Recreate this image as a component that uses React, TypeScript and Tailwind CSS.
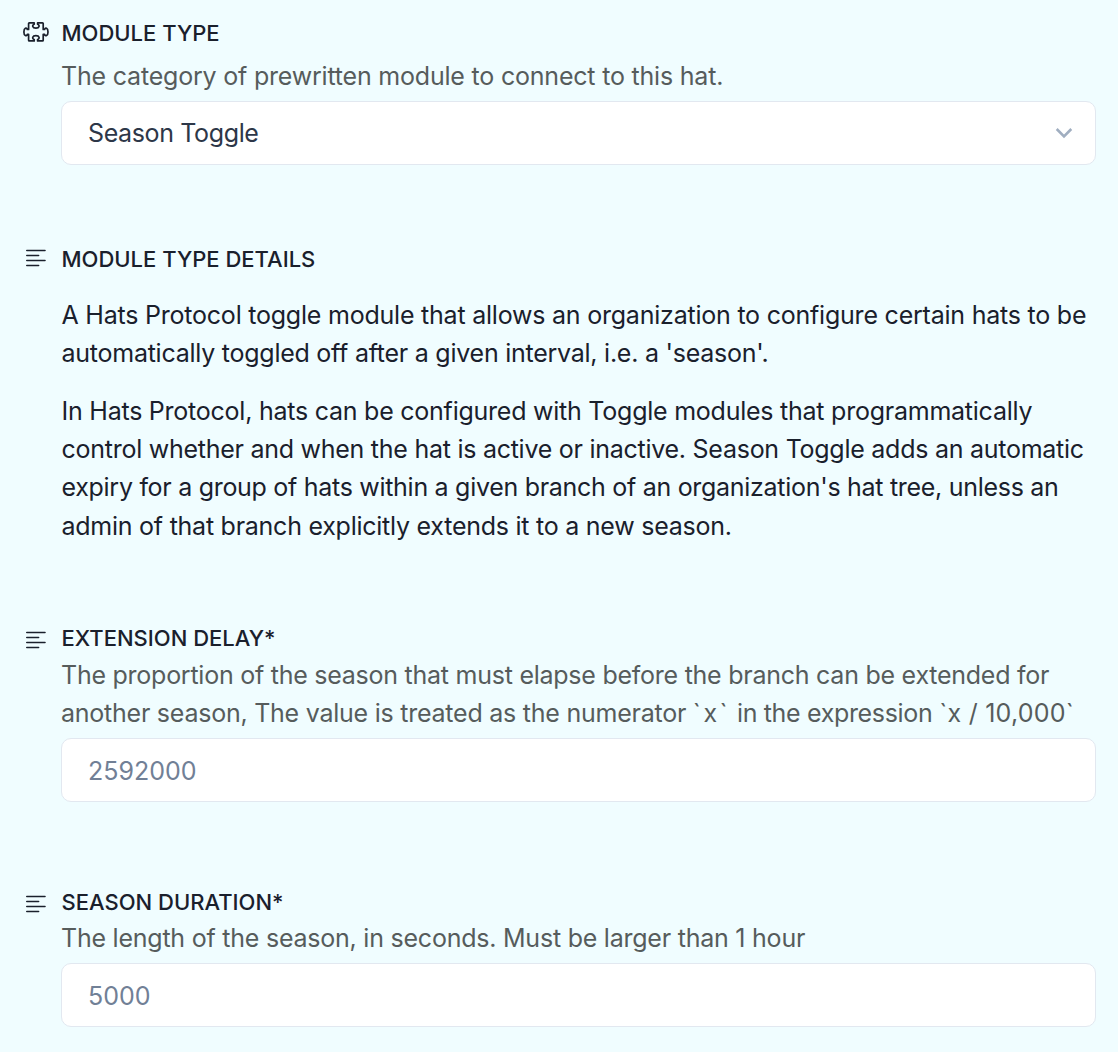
import React from "react";

function PuzzleIcon() {
  return (
    <svg width="26" height="22" viewBox="0 0 26 22" fill="none" stroke="#1A202C" strokeWidth="1.7" strokeLinejoin="round" strokeLinecap="round">
      <path d="M5.6 2.6 Q5.6 1.9 6.3 1.9 H11.2 V3.3 C8.8 4 9.2 7.1 12.9 7.1 C16.6 7.1 17 4 14.6 3.3 V1.9 H19.5 Q20.2 1.9 20.2 2.6 V8.4 H21.6 C22.2 6.3 25 6.6 25 10.9 C25 15.2 22.2 15.5 21.6 13.4 H20.2 V19.2 Q20.2 19.9 19.5 19.9 H14.6 V18.5 C17 17.8 16.6 14.7 12.9 14.7 C9.2 14.7 8.8 17.8 11.2 18.5 V19.9 H6.3 Q5.6 19.9 5.6 19.2 V13.4 H4.3 C3.7 15.5 .9 15.2 .9 10.9 C.9 6.6 3.7 6.3 4.3 8.4 H5.6 Z" />
    </svg>
  );
}

function TextIcon() {
  return (
    <svg width="20" height="18" viewBox="0 0 20 18" fill="none" stroke="#1A202C" strokeWidth="1.6" strokeLinecap="round">
      <path d="M.8 1.5H19M.8 6.5H12.6M.8 11.5H19M.8 16.5H12.6" />
    </svg>
  );
}

function Heading({ icon, iconClass, children }: { icon: React.ReactNode; iconClass: string; children: React.ReactNode }) {
  return (
    <div className="flex h-8 items-center">
      <span className={`flex shrink-0 ${iconClass}`}>{icon}</span>
      <h2 className="text-[22px] leading-8 font-medium whitespace-nowrap text-[#1A202C]">{children}</h2>
    </div>
  );
}

function Line({ className = "", children }: { className?: string; children: React.ReactNode }) {
  return <span className={`block whitespace-nowrap ${className}`}>{children}</span>;
}

const box = "flex h-16 w-[1035px] items-center rounded-[10px] border border-[#E2E8F0] bg-white pr-[21px] pl-[26px] text-[25px]";
const hint = "text-[25px] leading-[38px] text-[#565C5C]";

export default function App() {
  return (
    <main className="h-[1052px] w-[1118px] overflow-hidden bg-[#F0FDFF] pt-[17px] font-['Inter',sans-serif]">
      <section className="h-[226px]">
        <Heading icon={<PuzzleIcon />} iconClass="w-[38.5px] ml-[23px] pb-[2px]">MODULE TYPE</Heading>
        <div className="ml-[61px] pt-[8px]">
          <p className={hint}><Line className="tracking-[-0.2px]">The category of prewritten module to connect to this hat.</Line></p>
          <div className={`${box} mt-[6px] justify-between text-[#2D3748]`}>
            <span className="pt-[2px] tracking-[-0.37px]">Season Toggle</span>
            <svg width="20" height="12" viewBox="0 0 20 12" fill="none" stroke="#A0AEC0" strokeWidth="2.6">
              <path d="M2.7 2 10 9.3 17.3 2" />
            </svg>
          </div>
        </div>
      </section>
      <section className="h-[379px]">
        <Heading icon={<TextIcon />} iconClass="w-[35.5px] ml-[26px] pb-[2px]">MODULE TYPE DETAILS</Heading>
        <div className="ml-[61.5px] pt-[21px] text-[25px] leading-[38.2px] text-[#1A202C]">
          <p>
            <Line className="tracking-[-0.22px]">A Hats Protocol toggle module that allows an organization to configure certain hats to be</Line>
            <Line className="tracking-[-0.25px]">automatically toggled off after a given interval, i.e. a 'season'.</Line>
          </p>
          <p className="mt-[19.4px]">
            <Line className="tracking-[-0.24px]">In Hats Protocol, hats can be configured with Toggle modules that programmatically</Line>
            <Line className="tracking-[-0.26px]">control whether and when the hat is active or inactive. Season Toggle adds an automatic</Line>
            <Line className="tracking-[-0.29px]">expiry for a group of hats within a given branch of an organization's hat tree, unless an</Line>
            <Line className="pt-[0.8px] tracking-[-0.25px]">admin of that branch explicitly extends it to a new season.</Line>
          </p>
        </div>
      </section>
      <section className="h-[264px]">
        <Heading icon={<TextIcon />} iconClass="w-[35.5px] ml-[26px] pt-[4px]">EXTENSION DELAY*</Heading>
        <div className="ml-[61px] pt-[2px]">
          <p className={hint}>
            <Line className="tracking-[-0.25px]">The proportion of the season that must elapse before the branch can be extended for</Line>
            <Line className="tracking-[-0.24px]">
              another season, The value is treated as the numerator <span className="tracking-[2.5px]">`x`</span>{" "}
              <span className="tracking-[-0.34px]">in the expression</span>{" "}
              <span className="tracking-[0.25px]">`x / 10,000`</span>
            </Line>
          </p>
          <div className={`${box} mt-[6px] text-[#718096]`}><span className="pt-[3px]">2592000</span></div>
        </div>
      </section>
      <section>
        <Heading icon={<TextIcon />} iconClass="w-[35.5px] ml-[26px] pt-[4px]">SEASON DURATION*</Heading>
        <div className="ml-[61px] pt-px">
          <p className={hint}><Line className="tracking-[-0.23px]">The length of the season, in seconds. Must be larger than 1 hour</Line></p>
          <div className={`${box} mt-[6px] text-[#718096]`}><span className="pt-[3px]">5000</span></div>
        </div>
      </section>
    </main>
  );
}
